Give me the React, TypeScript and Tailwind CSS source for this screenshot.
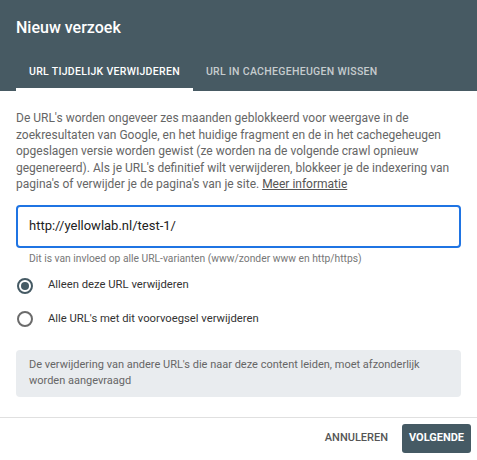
export default function App() {
  return (
    <div className="w-[477px] h-[460px] bg-white font-['Roboto',sans-serif] overflow-hidden">
      <div className="bg-[#475a63] h-[91px] flex flex-col">
        <div className="h-[56px] flex items-center px-4">
          <h1 className="text-[16px] font-medium text-white">Nieuw verzoek</h1>
        </div>
        <div className="flex px-4 flex-1">
          <div className="flex flex-col justify-between">
            <div className="flex-1 flex items-center px-[13px] text-[10.5px] font-medium tracking-[0.3px] text-white">
              URL TIJDELIJK VERWIJDEREN
            </div>
            <div className="h-[3px] bg-white" />
          </div>
          <div className="flex flex-col justify-between">
            <div className="flex-1 flex items-center px-[13px] text-[10.5px] font-medium tracking-[0.3px] text-white/70">
              URL IN CACHEGEHEUGEN WISSEN
            </div>
            <div className="h-[3px]" />
          </div>
        </div>
      </div>

      <div className="px-4">
        <p className="mt-[19px] text-[12px] leading-[16.5px] text-[#666]">
          De URL's worden ongeveer zes maanden geblokkeerd voor weergave in de zoekresultaten van
          Google, en het huidige fragment en de in het cachegeheugen opgeslagen versie worden gewist
          (ze worden na de volgende crawl opnieuw gegenereerd). Als je URL's definitief wilt
          verwijderen, blokkeer je de indexering van pagina's of verwijder je de pagina's van je site.{" "}
          <span className="underline text-[#555]">Meer informatie</span>
        </p>

        <div className="mt-[12px] h-[43px] border-2 border-[#1f74e3] rounded-[4px] flex items-center px-[11px] text-[13px] text-[#222]">
          http://yellowlab.nl/test-1/
        </div>
        <div className="mt-[4px] h-[13px] leading-[13px] pl-[13px] text-[10.3px] text-[#777]">
          Dit is van invloed op alle URL-varianten (www/zonder www en http/https)
        </div>

        <div className="mt-[13px] flex flex-col gap-[17.5px]">
          <label className="flex items-center h-[16px]">
            <span className="ml-[1px] w-[16px] h-[16px] rounded-full border-2 border-[#455a64] flex items-center justify-center">
              <span className="w-[8px] h-[8px] rounded-full bg-[#455a64]" />
            </span>
            <span className="ml-[15px] text-[11.25px] text-[#333]">Alleen deze URL verwijderen</span>
          </label>
          <label className="flex items-center h-[16px]">
            <span className="ml-[1px] w-[16px] h-[16px] rounded-full border-2 border-[#6b6b6b]" />
            <span className="ml-[15px] text-[11.25px] text-[#333]">
              Alle URL's met dit voorvoegsel verwijderen
            </span>
          </label>
        </div>

        <div className="mt-[22.5px] h-[47px] bg-[#e9ecef] rounded-[4px] px-[13px] pt-[7px] text-[11px] leading-[16px] text-[#666]">
          De verwijdering van andere URL's die naar deze content leiden, moet afzonderlijk worden
          aangevraagd
        </div>
      </div>

      <div className="mt-[20px] border-t border-[#e0e0e0] flex justify-end items-center gap-[10px] pt-[6px] pr-[6px]">
        <button className="h-[29px] px-1 text-[11px] font-medium text-[#555]">ANNULEREN</button>
        <button className="h-[29px] w-[69px] rounded-[3px] bg-[#455a64] text-[11px] font-bold text-white">
          VOLGENDE
        </button>
      </div>
    </div>
  );
}
